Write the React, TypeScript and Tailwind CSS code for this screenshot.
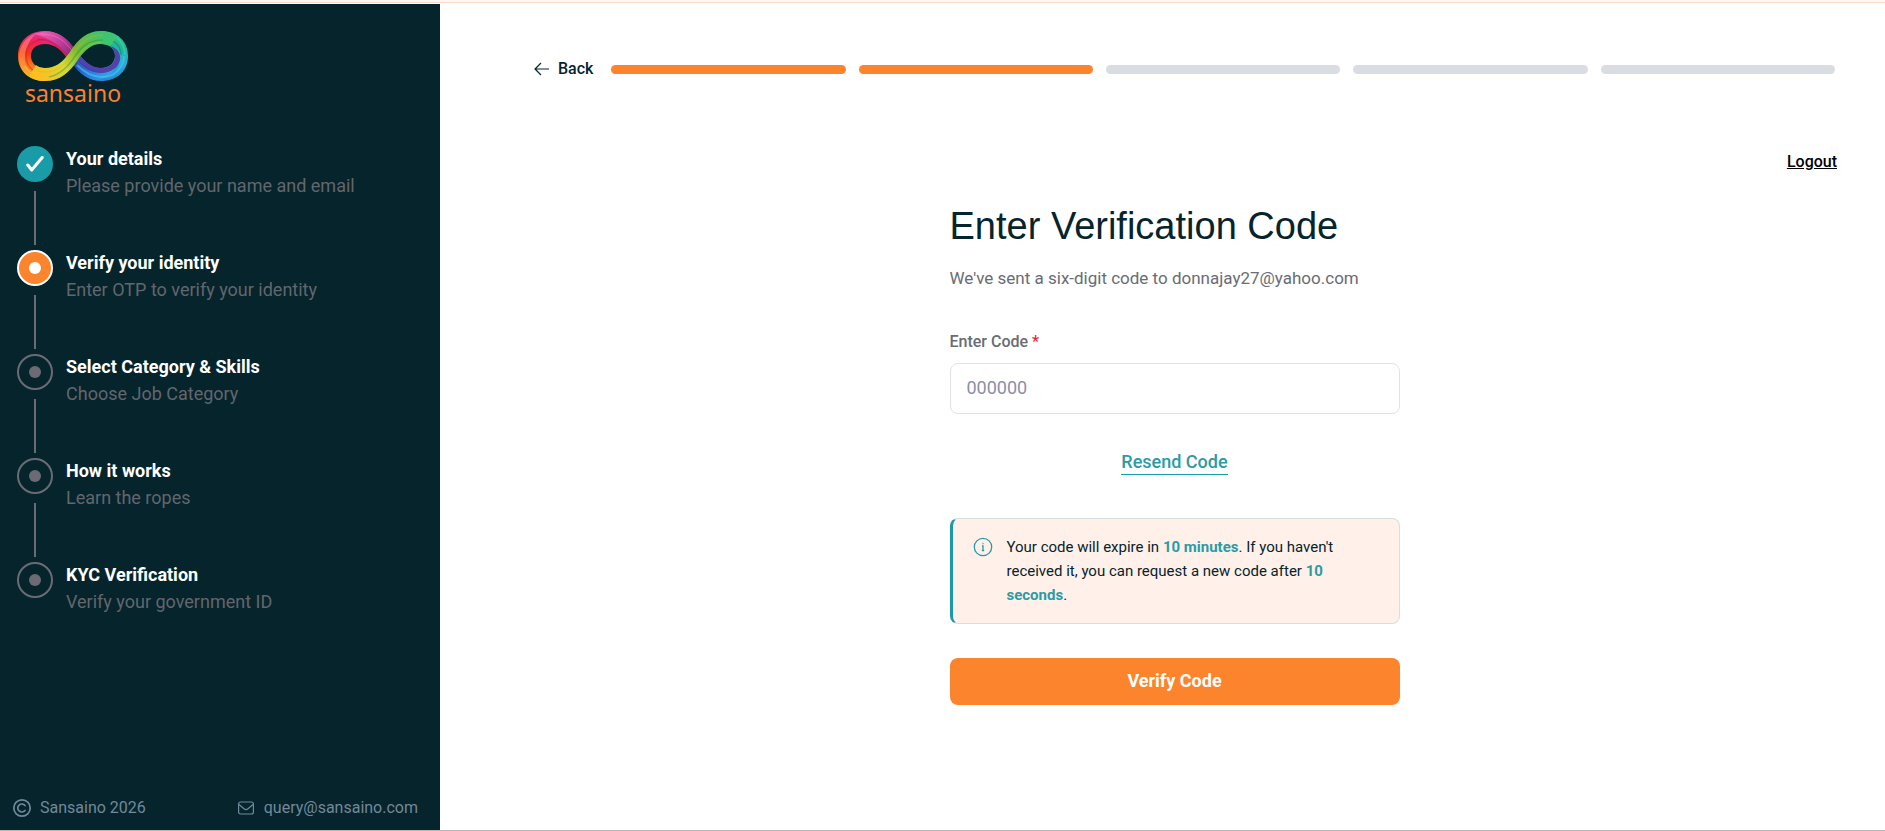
import React, { useState } from 'react';

interface Step {
  title: string;
  description: string;
  status: 'done' | 'current' | 'upcoming';
}

const STEPS: Step[] = [
  { title: 'Your details', description: 'Please provide your name and email', status: 'done' },
  { title: 'Verify your identity', description: 'Enter OTP to verify your identity', status: 'current' },
  { title: 'Select Category & Skills', description: 'Choose Job Category', status: 'upcoming' },
  { title: 'How it works', description: 'Learn the ropes', status: 'upcoming' },
  { title: 'KYC Verification', description: 'Verify your government ID', status: 'upcoming' },
];

const Logo: React.FC = () => (
  <div className="w-28 ml-px flex flex-col items-center">
    <svg viewBox="0 0 112 52" className="w-28 h-[52px]" fill="none" aria-hidden="true">
      <defs>
        <linearGradient id="leftLoop" x1="34" y1="2" x2="22" y2="52" gradientUnits="userSpaceOnUse">
          <stop offset="0" stopColor="#dc3f9c" />
          <stop offset="0.25" stopColor="#ec2366" />
          <stop offset="0.5" stopColor="#f5341f" />
          <stop offset="0.78" stopColor="#f98a1c" />
          <stop offset="1" stopColor="#fbc91f" />
        </linearGradient>
        <linearGradient id="leftTop" x1="22" y1="4" x2="60" y2="30" gradientUnits="userSpaceOnUse">
          <stop offset="0" stopColor="#ee5fb0" />
          <stop offset="0.5" stopColor="#c23b9b" />
          <stop offset="1" stopColor="#6d2769" />
        </linearGradient>
        <linearGradient id="leftOuter" x1="20" y1="4" x2="10" y2="46" gradientUnits="userSpaceOnUse">
          <stop offset="0" stopColor="#f35aa0" />
          <stop offset="0.5" stopColor="#fb6a3c" />
          <stop offset="1" stopColor="#fbb32b" />
        </linearGradient>
        <linearGradient id="rightLoop" x1="84" y1="0" x2="80" y2="52" gradientUnits="userSpaceOnUse">
          <stop offset="0" stopColor="#3fc56f" />
          <stop offset="0.3" stopColor="#1fb99a" />
          <stop offset="0.6" stopColor="#27b0dc" />
          <stop offset="1" stopColor="#2580dc" />
        </linearGradient>
        <linearGradient id="cross" x1="22" y1="48" x2="86" y2="4" gradientUnits="userSpaceOnUse">
          <stop offset="0" stopColor="#fbbf1f" />
          <stop offset="0.35" stopColor="#d6da37" />
          <stop offset="0.6" stopColor="#72bb35" />
          <stop offset="1" stopColor="#3cc571" />
        </linearGradient>
        <linearGradient id="lower" x1="56" y1="28" x2="98" y2="48" gradientUnits="userSpaceOnUse">
          <stop offset="0" stopColor="#2b3f9f" />
          <stop offset="0.4" stopColor="#2a76dc" />
          <stop offset="1" stopColor="#2fb6e6" />
        </linearGradient>
      </defs>
      {/* left loop, from the magenta top round to the yellow base */}
      <path
        d="M58 22C50 8 40 1 28 1 12 1 1 11 1 26s11 25 27 25v-13c-9 0-14-5-14-12 0-8 6-12 14-12 10 0 17 6 25 18z"
        fill="url(#leftLoop)"
      />
      <path d="M17 4C32-2 48 2 59 21l-6 10C44 16 35 8 17 4z" fill="url(#leftTop)" />
      <path d="M20 9c14 0 24 7 33 21" stroke="#a31f5f" strokeWidth="1.500" strokeOpacity="0.5" />
      <path d="M24 4c14 0 25 6 33 20" stroke="#ff9bd0" strokeWidth="1" strokeOpacity="0.4" />
      <path d="M20 3C8 7 2 16 2 27c0 10 6 18 14 22C6 38 3 18 20 3z" fill="url(#leftOuter)" />
      <path d="M27 10C15 9 9 17 9 26c0 8 5 14 12 17" stroke="#c9191c" strokeWidth="1.500" strokeOpacity="0.4" />
      <path d="M8 36c5 9 13 12 24 12" stroke="#fff0a0" strokeWidth="1" strokeOpacity="0.4" />
      {/* right loop, behind the crossing band */}
      <path
        d="M54 30c8 14 18 21 30 21 16 0 27-10 27-25S100 1 84 1v13c9 0 14 5 14 12s-6 12-14 12c-10 0-17-6-25-18z"
        fill="url(#rightLoop)"
      />
      <path d="M60 22c8 10 15 16 24 16 10 0 14-6 14-12 0-5-2-8-5-10 8 2 11 8 10 14-2 9-10 14-19 13-13 0-21-7-28-18z" fill="#5541ae" />
      <path d="M56 26c8 11 16 17 27 17 7 0 12-2 16-6-5 8-11 12-19 13-12-1-21-10-26-19z" fill="url(#lower)" />
      <path d="M60 35c8 8 15 12 25 12 13 0 21-9 22-21" stroke="#49c6ee" strokeWidth="2" strokeOpacity="0.6" />
      <path d="M60 30c7 7 14 11 23 12" stroke="#1f4fb0" strokeWidth="1.500" strokeOpacity="0.6" />
      <path d="M84 8c12 0 20 7 20 17" stroke="#11786d" strokeWidth="1.500" strokeOpacity="0.5" />
      <path d="M90 3c11 3 18 11 18 22" stroke="#5be0c4" strokeWidth="1.500" strokeOpacity="0.4" />
      {/* crossing band */}
      <path
        d="M26 51c16 1 26-8 34-20 8-11 14-17 24-17 4 0 7 1 9 2l7-9C95 3 90 1 84 1 70 1 61 9 53 22 45 33 38 38 28 38c-4 0-7-1-9-3l-7 11c4 3 9 5 14 5z"
        fill="url(#cross)"
      />
      <path d="M20 41c18 4 27-5 35-16S70 5 86 5" stroke="#f3a61c" strokeWidth="1.500" strokeOpacity="0.3" />
      <path d="M32 47c13-3 20-12 27-22s14-15 27-15" stroke="#2f8f3a" strokeWidth="1.500" strokeOpacity="0.4" />
      <path d="M38 48c10-5 15-12 22-21s13-14 24-15" stroke="#9be05a" strokeWidth="1" strokeOpacity="0.4" />
    </svg>
    <span className="text-[23px] leading-[22px] text-[#ff7f32] font-['Noto_Sans',sans-serif]">sansaino</span>
  </div>
);

const StepMarker: React.FC<{ status: Step['status'] }> = ({ status }) => {
  if (status === 'done') {
    return (
      <span className="flex size-9 items-center justify-center rounded-full bg-[#1a9ba8]">
        <svg viewBox="0 0 18 16" className="w-[18px] h-4" fill="none" aria-hidden="true">
          <path d="M1.800 9l3.900 5L16.200 1.500" stroke="#fff" strokeWidth="3" strokeLinecap="round" strokeLinejoin="round" />
        </svg>
      </span>
    );
  }
  if (status === 'current') {
    return (
      <span className="flex size-9 items-center justify-center rounded-full border-2 border-white bg-[#fc842d]">
        <span className="size-3 rounded-full bg-white" />
      </span>
    );
  }
  return (
    <span className="flex size-9 items-center justify-center rounded-full border-2 border-[#6b6b76]">
      <span className="size-3 rounded-full bg-[#6b6b76]" />
    </span>
  );
};

const Sidebar: React.FC = () => (
  <aside className="flex w-[440px] shrink-0 flex-col bg-[#05242c] px-4 pt-[26px]">
    <Logo />
    <ol className="mt-[42px]">
      {STEPS.map((step, index) => (
        <li key={step.title} className="flex gap-3">
          <div className="flex w-[38px] flex-col items-center">
            <StepMarker status={step.status} />
            {index < STEPS.length - 1 && <span className="mt-[9px] mb-[5px] h-[54px] w-0.5 bg-[#6b6b76]" />}
          </div>
          <div className="pb-4">
            <h2 className="text-lg leading-[26px] font-bold text-white">{step.title}</h2>
            <p className="text-lg leading-7 text-[#63666c]">{step.description}</p>
          </div>
        </li>
      ))}
    </ol>
    <footer className="mt-auto flex items-center justify-between pb-2 -ml-1 pr-1.5 text-base leading-7 text-[#71899a]">
      <span className="flex items-center gap-2">
        <svg viewBox="0 0 20 20" className="size-5" fill="none" stroke="currentColor" strokeWidth="1.700" aria-hidden="true">
          <circle cx="10" cy="10" r="8.200" />
          <path d="M13 7.600a4 4 0 1 0 0 4.800" strokeLinecap="round" />
        </svg>
        Sansaino 2026
      </span>
      <a href="mailto:query@sansaino.com" className="flex items-center gap-2.5">
        <svg viewBox="0 0 16 14" className="w-4 h-3.5" fill="none" stroke="currentColor" strokeWidth="1.200" aria-hidden="true">
          <rect x="0.600" y="1" width="14.800" height="12" rx="2" />
          <path d="M1 3.500l5 4.200a3 3 0 0 0 4 0l5-4.200" />
        </svg>
        query@sansaino.com
      </a>
    </footer>
  </aside>
);

const ProgressBar: React.FC = () => (
  <div className="flex flex-1 gap-[13px]">
    {STEPS.map((step) => (
      <span
        key={step.title}
        className={`h-[9px] flex-1 rounded-full ${step.status === 'upcoming' ? 'bg-[#dadce3]' : 'bg-[#fc842d]'}`}
      />
    ))}
  </div>
);

export default function App() {
  const [code, setCode] = useState('');

  return (
    <div className="flex min-h-screen flex-col border-b border-[#b8b8b8] bg-white font-[Roboto,sans-serif]">
      <div className="h-[3px] border-b border-[#fbdccb] bg-[#fff8f4]" />
      <div className="flex flex-1 pt-px">
        <Sidebar />
        <main className="flex-1 pl-[94px] pr-12">
          <div className="flex items-center gap-[18px] pt-[53px] pr-0.5">
            <button type="button" className="flex items-center gap-2 text-base leading-6 font-medium text-[#05242c]">
              <svg viewBox="0 0 16 14" className="w-4 h-3.5" fill="none" stroke="currentColor" strokeWidth="1.200" aria-hidden="true">
                <path d="M7 1L1 7l6 6M1 7h14" />
              </svg>
              Back
            </button>
            <ProgressBar />
          </div>
          <div className="mt-[69px] flex justify-end">
            <a href="#logout" className="text-base leading-6 font-medium text-black underline">
              Logout
            </a>
          </div>

          <div className="pr-[22px]">
            <form className="mx-auto mt-[29px] w-[450px]" onSubmit={(e) => e.preventDefault()}>
              <h1 className="whitespace-nowrap text-[38px] leading-[46px] text-[#05242c] font-['Liberation_Sans',sans-serif]">
                Enter Verification Code
              </h1>
              <p className="mt-[17px] text-[17px] leading-6 text-[#696c74]">
                We've sent a six-digit code to donnajay27@yahoo.com
              </p>
              <label htmlFor="code" className="mt-10 block text-base leading-6 font-medium text-[#696c74]">
                Enter Code <span className="text-[#e02d3c]">*</span>
              </label>
              <input
                id="code"
                type="text"
                inputMode="numeric"
                maxLength={6}
                placeholder="000000"
                value={code}
                onChange={(e) => setCode(e.target.value)}
                className="mt-[9px] block h-[51px] w-full rounded-lg border border-[#e0e2e6] px-4 pb-0.5 text-lg text-[#05242c] placeholder:text-[#8a8fa8] focus:border-[#1a9ba8] focus:outline-none"
              />
              <button
                type="button"
                className="mx-auto mt-9 block border-b border-[#1a9ba8] text-lg leading-6 font-medium text-[#2b9ba6]"
              >
                Resend Code
              </button>
              <div className="mt-[43px] flex gap-3.5 rounded-lg border border-l-3 border-[#d5dfde] border-l-[#1a9ba8] bg-[#fff1e9] px-5 py-4">
                <svg viewBox="0 0 20 20" className="mt-0.5 size-5 shrink-0" fill="none" stroke="#2b9ba6" strokeWidth="1.300" aria-hidden="true">
                  <circle cx="10" cy="10" r="8.700" />
                  <path d="M9 9h1v4.500M8.800 13.500h2.400M9.500 6.500h1" />
                </svg>
                <p className="text-[15px] leading-6 text-[#05242c]">
                  Your code will expire in <strong className="font-bold text-[#2b9ba6]">10 minutes</strong>. If you haven't
                  received it, you can request a new code after{' '}
                  <strong className="font-bold text-[#2b9ba6]">10 seconds</strong>.
                </p>
              </div>
              <button
                type="submit"
                className="mt-[34px] h-[47px] w-full rounded-lg bg-[#fc842d] pb-0.5 text-lg font-bold text-white"
              >
                Verify Code
              </button>
            </form>
          </div>
        </main>
      </div>
    </div>
  );
}
